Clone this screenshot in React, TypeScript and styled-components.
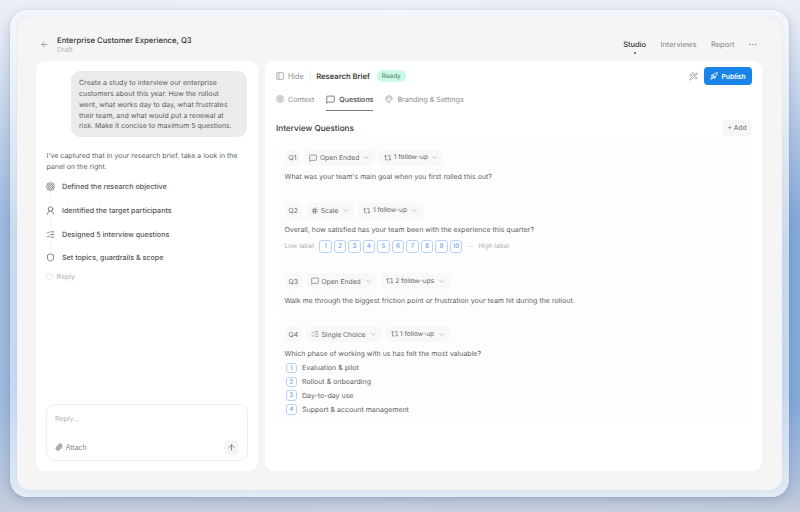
import React from "react";
import styled, { createGlobalStyle, css } from "styled-components";
import {
  ArrowLeft,
  ArrowUp,
  ChevronDown,
  Hash,
  ListChecks,
  Palette,
  Paperclip,
  Rocket,
  Shield,
  WandSparkles,
} from "lucide-react";

const GlobalStyle = createGlobalStyle`
  *, *::before, *::after { box-sizing: border-box; }
  html, body { margin: 0; padding: 0; overflow: hidden; }
  body {
    font-family: Inter, "Liberation Sans", sans-serif;
    font-size: 7.03px;
    line-height: 11px;
    color: #5f5f5f;
    text-rendering: geometricPrecision;
    -webkit-font-smoothing: antialiased;
  }
  button { font: inherit; color: inherit; border: 0; margin: 0; padding: 0; background: none; letter-spacing: inherit; }
  svg { display: block; flex: none; }
`;

const Backdrop = styled.div`
  width: 800px;
  height: 512px;
  padding: 10px 11px 15px 10px;
  background:
    linear-gradient(to bottom, #eceff6 0, rgba(236, 239, 246, 0.9) 30px, rgba(236, 239, 246, 0) 220px),
    linear-gradient(to top, rgba(201, 207, 220, 0.95) 0, rgba(201, 207, 220, 0.6) 30px, rgba(201, 207, 220, 0) 110px),
    linear-gradient(to right, #9cb8dc 0, #a9c1e2 50%, #84a8da 100%);
`;

const Frame = styled.div`
  height: 487px;
  padding: 7px;
  border-radius: 17px;
  background: linear-gradient(to bottom, #f3f7fb 0, #e9f0f7 80px, #c9daec 230px, #c6d8ef 380px, #e1eaf5 100%);
  box-shadow: 0 3px 8px rgba(70, 90, 130, 0.28), 0 0 1px rgba(90, 110, 150, 0.25);
`;

const Window = styled.div`
  height: 473px;
  padding: 0 20px 19px 19px;
  border-radius: 12px;
  background: #f5f5f5;
  box-shadow: 0 0 1px rgba(100, 120, 150, 0.35);
  display: flex;
  flex-direction: column;
`;

const TopBar = styled.header`
  height: 44px;
  display: flex;
  align-items: center;
  padding: 11px 5px 0 4px;
  color: #858585;
`;

const StudyTitle = styled.div`
  margin-left: 8px;
  display: flex;
  flex-direction: column;
`;

const StudyName = styled.h1`
  margin: 0;
  font-size: 7.73px;
  line-height: 9px;
  font-weight: 500;
  color: #333;
`;

const StudyState = styled.span`
  font-size: 6.8px;
  line-height: 9px;
  color: #b4b4b4;
`;

const Nav = styled.nav`
  margin-left: auto;
  display: flex;
  gap: 14.5px;
  align-items: center;
  font-size: 7.45px;
`;

const NavItem = styled.a<{ $active?: boolean }>`
  position: relative;
  font-weight: ${(p) => (p.$active ? 500 : 400)};
  color: ${(p) => (p.$active ? "#333" : "#858585")};
  ${(p) =>
    p.$active &&
    css`
      &::after {
        content: "";
        position: absolute;
        left: 50%;
        top: 13px;
        width: 2px;
        height: 2px;
        margin-left: -1px;
        border-radius: 50%;
        background: #555;
      }
    `}
`;

const Panels = styled.main`
  flex: 1;
  display: grid;
  grid-template-columns: 222px 1fr;
  gap: 7px;
`;

const Panel = styled.section<{ $inset?: number }>`
  background: #fff;
  border-radius: 9px;
  padding: 10px 10px 10px ${(p) => p.$inset ?? 10}px;
  display: flex;
  flex-direction: column;
`;

const Bubble = styled.div`
  align-self: flex-end;
  width: 176px;
  height: 66px;
  padding: 7px 8px;
  border-radius: 9px;
  background: #ebebeb;
  line-height: 10.85px;
  white-space: pre;
  margin-right: 1px;
`;

const Answer = styled.p`
  margin: 14px 0 0 0.5px;
  line-height: 10.85px;
  white-space: pre;
`;

const Steps = styled.ul`
  list-style: none;
  margin: 8.7px 0 0 0.3px;
  padding: 0;
`;

const Step = styled.li`
  display: grid;
  grid-template-columns: 9px 1fr;
  column-gap: 6.7px;
  align-items: center;
  grid-template-rows: 11px 12.67px;
  color: #555;
  font-size: 7.15px;
  font-weight: 500;
  justify-items: center;

  & > span { justify-self: start; }
  &:not(:last-child)::after {
    content: "";
    width: 1px;
    height: 10px;
    background: #f1f1f1;
  }
`;

const ReplyHint = styled.div`
  display: flex;
  align-items: center;
  gap: 3.5px;
  margin-top: -5.3px;
  color: #b0b0b0;
`;

const Composer = styled.div`
  margin-top: auto;
  height: 57px;
  border: 1px solid #eee;
  border-radius: 9px;
  padding: 7.5px 8px 5.5px;
  display: flex;
  flex-direction: column;
  justify-content: space-between;
  color: #b4b4b4;
`;

const ComposerTools = styled.div`
  display: flex;
  justify-content: space-between;
  align-items: center;
`;

const AttachButton = styled.button`
  display: flex;
  align-items: center;
  gap: 2.5px;
  color: #858585;

  & svg { color: #999; }
`;

const SendButton = styled.button`
  width: 15px;
  height: 15px;
  display: grid;
  place-items: center;
  border-radius: 5px;
  background: #f5f5f5;
  color: #666;
`;

const BriefBar = styled.div`
  height: 10px;
  display: flex;
  align-items: center;
`;

const HideButton = styled.button`
  display: flex;
  align-items: center;
  gap: 4px;
  padding-right: 6.5px;
  border-right: 1px solid #eee;
  font-size: 7.2px;
  color: #8d8d8d;
`;

const BriefTitle = styled.h2`
  margin: 0 6.8px 0 5px;
  font-size: 7.6px;
  font-weight: 600;
  color: #3c3c3c;
`;

const ReadyPill = styled.span`
  height: 12px;
  padding: 0 5px;
  border-radius: 6px;
  line-height: 12px;
  font-size: 6.3px;
  font-weight: 500;
  background: #cbf8e3;
  color: #4b8c6c;
`;

const BarActions = styled.div`
  margin-left: auto;
  display: flex;
  align-items: center;
  gap: 6.5px;
  color: #888;
`;

const PublishButton = styled.button`
  width: 48px;
  height: 18px;
  border-radius: 4px;
  display: flex;
  align-items: center;
  justify-content: center;
  gap: 3px;
  background: #1a83e7;
  color: #fff;
  font-size: 6.8px;
  font-weight: 600;
`;

const Tabs = styled.div`
  display: flex;
  gap: 12px;
  height: 18px;
  margin-top: 12px;
`;

const Tab = styled.div<{ $active?: boolean }>`
  display: flex;
  align-items: center;
  gap: 4px;
  height: 17.5px;
  padding-bottom: 4px;
  border-bottom: 1.5px solid ${(p) => (p.$active ? "#777" : "transparent")};
  color: ${(p) => (p.$active ? "#444" : "#8d8d8d")};
  font-weight: ${(p) => (p.$active ? 500 : 400)};
  font-size: ${(p) => (p.$active ? 7.05 : 7.15)}px;
`;

const SectionHead = styled.div`
  display: flex;
  align-items: center;
  justify-content: space-between;
  height: 16px;
  margin: 8.5px 0 5px;
`;

const SectionTitle = styled.h3`
  margin: 0;
  font-size: 8.2px;
  line-height: 12px;
  font-weight: 500;
  color: #333;
`;

const AddButton = styled.button`
  width: 30px;
  height: 16px;
  border-radius: 4px;
  background: #f6f6f6;
  color: #666;
  font-size: 6.7px;
  line-height: 17px;
`;

const Card = styled.article<{ $height: number; $gap: number }>`
  height: ${(p) => p.$height}px;
  margin-bottom: ${(p) => p.$gap}px;
  padding: 9px 8.5px 0;
  border-radius: 5px;
  background: #fdfdfd;
`;

const Chips = styled.div`
  display: flex;
  gap: 4px;
  height: 16px;
`;

const Chip = styled.span`
  height: 16px;
  padding: 0 5px;
  border-radius: 5px;
  display: flex;
  align-items: center;
  gap: 2.5px;
  background: #f8f8f8;
  color: #666;
  font-size: 6.75px;
  white-space: nowrap;

  & svg:last-child:not(:first-child) { margin-left: 1.5px; color: #999; }
`;

const NumberChip = styled(Chip)`
  padding: 0 4px;
`;

const FollowChip = styled(Chip)`
  font-size: 6.6px;
  gap: 2px;
`;

const Prompt = styled.p`
  margin: 5.8px 0 0;
`;

const Scale = styled.div`
  display: flex;
  align-items: center;
  gap: 2px;
  margin-top: 5px;
  font-size: 6.55px;
  color: #b0b0b0;

  & > :first-child { margin-right: 3.3px; }
`;

const NumberBox = styled.span<{ $size: number }>`
  width: ${(p) => p.$size}px;
  height: ${(p) => p.$size}px;
  flex: none;
  border: 1px solid #b7d1fb;
  border-radius: 3px;
  background: #fff;
  color: #6f9ff0;
  font-size: 6.3px;
  font-weight: 500;
  text-align: center;
  line-height: ${(p) => p.$size - 1}px;
`;

const Dash = styled.i`
  width: 5px;
  height: 1px;
  margin: 0 3.5px;
  background: #e2e2e2;
`;

const Options = styled.ol`
  list-style: none;
  margin: 2px 0 0;
  padding: 0 0 0 1.5px;
`;

const Option = styled.li`
  height: 13.9px;
  display: flex;
  align-items: center;
  gap: 5.5px;
`;

const TargetIcon = ({ size = 9 }: { size?: number }) => (
  <svg width={size} height={size} viewBox="0 0 24 24" fill="none" stroke="currentColor" strokeWidth="1.7">
    <circle cx="12" cy="12" r="10.5" />
    <circle cx="12" cy="12" r="6.5" />
    <circle cx="12" cy="12" r="2.5" />
  </svg>
);

const PersonIcon = () => (
  <svg width="9" height="9" viewBox="0 0 24 24" fill="none" stroke="currentColor" strokeWidth="2" strokeLinecap="round">
    <circle cx="12" cy="8" r="6" />
    <path d="M3.5 22c.8-4.6 3.5-7.5 6-8.3M20.5 22c-.8-4.6-3.5-7.5-6-8.3" />
  </svg>
);

const BubbleIcon = ({ size = 9 }: { size?: number }) => (
  <svg width={size} height={size} viewBox="0 0 24 24" fill="none" stroke="currentColor" strokeWidth="1.8" strokeLinejoin="round">
    <path d="M2 22V4.500A1.500 1.500 0 0 1 3.500 3h17A1.500 1.500 0 0 1 22 4.500v13a1.500 1.500 0 0 1-1.500 1.500H6z" />
  </svg>
);

const SidebarIcon = () => (
  <svg width="8" height="8" viewBox="0 0 24 24" fill="none" stroke="currentColor" strokeWidth="2">
    <rect x="2" y="2" width="20" height="20" rx="2" />
    <path d="M9 2v20M4.500 7h2M4.500 11h2" />
  </svg>
);

const LoopIcon = () => (
  <svg width="7.5" height="7.5" viewBox="0 0 24 24" fill="none" stroke="currentColor" strokeWidth="1.9" strokeLinecap="round" strokeLinejoin="round">
    <path d="M1.500 8 5 4.500 8.500 8M5 5v14h6M22.500 16 19 19.500 15.500 16M19 19V5h-6" />
  </svg>
);

const RingIcon = () => (
  <svg width="7" height="7" viewBox="0 0 14 14" fill="none" stroke="#cfcfcf" strokeWidth="1.5">
    <circle cx="7" cy="7" r="6" strokeDasharray="3.5 1.2" />
  </svg>
);

const MoreIcon = () => (
  <svg width="8" height="3" viewBox="0 0 16 6" fill="#888">
    <circle cx="2" cy="3" r="1.5" />
    <circle cx="8" cy="3" r="1.5" />
    <circle cx="14" cy="3" r="1.5" />
  </svg>
);

const steps = [
  { icon: <TargetIcon />, label: "Defined the research objective" },
  { icon: <PersonIcon />, label: "Identified the target participants" },
  { icon: <ListChecks size={9} />, label: "Designed 5 interview questions" },
  { icon: <Shield size={9} />, label: "Set topics, guardrails & scope" },
];

const openEnded = <BubbleIcon size={8} />;

const questions = [
  { id: "Q1", icon: openEnded, kind: "Open Ended", follow: "1 follow-up", text: "What was your team's main goal when you first rolled this out?", height: 48, gap: 5 },
  { id: "Q2", icon: <Hash size={7.5} />, kind: "Scale", follow: "1 follow-up", text: "Overall, how satisfied has your team been with the experience this quarter?", height: 66, gap: 4.7, scale: true },
  { id: "Q3", icon: openEnded, kind: "Open Ended", follow: "2 follow-ups", text: "Walk me through the biggest friction point or frustration your team hit during the rollout.", height: 48, gap: 5 },
  { id: "Q4", icon: <ListChecks size={8} strokeWidth={1.7} />, kind: "Single Choice", follow: "1 follow-up", text: "Which phase of working with us has felt the most valuable?", height: 106, gap: 0, options: ["Evaluation & pilot", "Rollout & onboarding", "Day-to-day use", "Support & account management"] },
];

export default function App() {
  return (
    <>
      <GlobalStyle />
      <Backdrop>
        <Frame>
          <Window>
            <TopBar>
              <ArrowLeft size={9} />
              <StudyTitle>
                <StudyName>Enterprise Customer Experience, Q3</StudyName>
                <StudyState>Draft</StudyState>
              </StudyTitle>
              <Nav>
                <NavItem $active>Studio</NavItem>
                <NavItem>Interviews</NavItem>
                <NavItem>Report</NavItem>
                <MoreIcon />
              </Nav>
            </TopBar>
            <Panels>
              <Panel>
                <Bubble>
                  {"Create a study to interview our enterprise\ncustomers about this year. How the rollout\nwent, what works day to day, what frustrates\ntheir team, and what would put a renewal at\nrisk. Make it concise to maximum 5 questions."}
                </Bubble>
                <Answer>{"I've captured that in your research brief, take a look in the\npanel on the right."}</Answer>
                <Steps>
                  {steps.map((s) => (
                    <Step key={s.label}>
                      {s.icon}
                      <span>{s.label}</span>
                    </Step>
                  ))}
                </Steps>
                <ReplyHint>
                  <RingIcon />
                  Reply
                </ReplyHint>
                <Composer>
                  <span>Reply...</span>
                  <ComposerTools>
                    <AttachButton>
                      <Paperclip size={8} strokeWidth={3} fill="#c8c8c8" />
                      Attach
                    </AttachButton>
                    <SendButton>
                      <ArrowUp size={9} />
                    </SendButton>
                  </ComposerTools>
                </Composer>
              </Panel>
              <Panel $inset={11}>
                <BriefBar>
                  <HideButton>
                    <SidebarIcon />
                    Hide
                  </HideButton>
                  <BriefTitle>Research Brief</BriefTitle>
                  <ReadyPill>Ready</ReadyPill>
                  <BarActions>
                    <WandSparkles size={9} strokeWidth={1.8} />
                    <PublishButton>
                      <Rocket size={8} strokeWidth={2.5} />
                      Publish
                    </PublishButton>
                  </BarActions>
                </BriefBar>
                <Tabs>
                  <Tab>
                    <TargetIcon size={8} />
                    Context
                  </Tab>
                  <Tab $active>
                    <BubbleIcon />
                    Questions
                  </Tab>
                  <Tab>
                    <Palette size={8} strokeWidth={1.8} />
                    Branding &amp; Settings
                  </Tab>
                </Tabs>
                <SectionHead>
                  <SectionTitle>Interview Questions</SectionTitle>
                  <AddButton>+ Add</AddButton>
                </SectionHead>
                {questions.map((q) => (
                  <Card key={q.id} $height={q.height} $gap={q.gap}>
                    <Chips>
                      <NumberChip>{q.id}</NumberChip>
                      <Chip>
                        {q.icon}
                        {q.kind}
                        <ChevronDown size={7} />
                      </Chip>
                      <FollowChip>
                        <LoopIcon />
                        {q.follow}
                        <ChevronDown size={7} />
                      </FollowChip>
                    </Chips>
                    <Prompt>{q.text}</Prompt>
                    {q.scale && (
                      <Scale>
                        <span>Low label</span>
                        {Array.from({ length: 10 }, (_, i) => (
                          <NumberBox key={i} $size={12.5}>
                            {i + 1}
                          </NumberBox>
                        ))}
                        <Dash />
                        <span>High label</span>
                      </Scale>
                    )}
                    {q.options && (
                      <Options>
                        {q.options.map((label, i) => (
                          <Option key={label}>
                            <NumberBox $size={10.5}>{i + 1}</NumberBox>
                            {label}
                          </Option>
                        ))}
                      </Options>
                    )}
                  </Card>
                ))}
              </Panel>
            </Panels>
          </Window>
        </Frame>
      </Backdrop>
    </>
  );
}
